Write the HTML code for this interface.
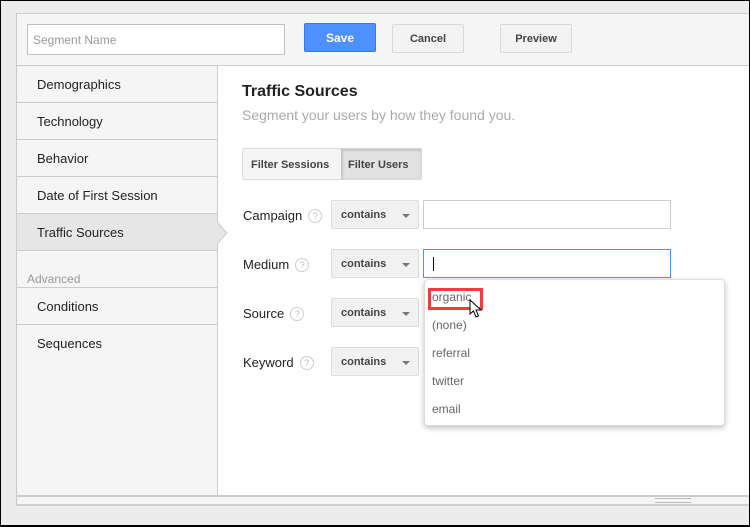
<!DOCTYPE html><html><head><style>
*{margin:0;padding:0;box-sizing:border-box}
body{width:750px;height:527px;overflow:hidden;background:#ececec;font-family:"Liberation Sans",Arial,sans-serif;position:relative}
.a{position:absolute}
.frame{left:0;top:0;width:750px;height:527px;border:1px solid #000;border-bottom:2px solid #000}
.panel{left:16px;top:13px;width:734px;height:493px;border:1px solid #ccc;border-right:none;background:#fff}
.hdr{left:17px;top:14px;width:733px;height:52px;background:#f5f5f5;border-bottom:1px solid #ccc}
.btn{border:1px solid #d9d9d9;border-radius:2px;background:#f3f3f3;font-size:11px;font-weight:bold;color:#444;text-align:center}
.side{left:17px;top:66px;width:201px;height:430px;background:#f5f5f5;border-right:1px solid #ccc}
.it{position:absolute;left:0;width:200px;height:37px;border-bottom:1px solid #ccc;font-size:13px;color:#222;padding-left:20px;line-height:38px}
.lbl{position:absolute;left:243px;font-size:13px;color:#222}
.q{display:inline-block;width:14px;height:14px;border:1px solid #ccc;border-radius:50%;font-size:9px;color:#bbb;text-align:center;line-height:12px;margin-left:6px;vertical-align:1px}
.sel{position:absolute;left:331px;width:88px;height:29px;border:1px solid #dcdcdc;border-radius:2px;background:#f1f1f1;font-size:11px;font-weight:bold;color:#444;padding-left:9px;line-height:28px}
.sel:after{content:"";position:absolute;right:8px;top:13px;border:4px solid transparent;border-top:4px solid #777;border-bottom:none}
.inp{position:absolute;left:423px;width:248px;height:29px;border:1px solid #ccc;background:#fff}
.dd{left:424px;top:279px;width:301px;height:147px;background:#fff;border:1px solid #ddd;border-radius:4px;box-shadow:0 2px 6px rgba(0,0,0,.25)}
.di{position:absolute;left:7px;font-size:12px;color:#666}
</style></head><body>
<div class="a panel"></div>
<div class="a hdr"></div>
<div class="a" style="left:27px;top:24px;width:258px;height:31px;border:1px solid #c0c0c0;background:#fff;font-size:12px;color:#999;padding:8px 0 0 5px">Segment Name</div>
<div class="a" style="left:304px;top:23px;width:72px;height:29px;background:#4d90fe;border:1px solid #3079ed;border-radius:2px;color:#fff;font-size:12px;font-weight:bold;text-align:center;line-height:29px">Save</div>
<div class="a btn" style="left:392px;top:24px;width:72px;height:29px;line-height:29px">Cancel</div>
<div class="a btn" style="left:500px;top:24px;width:72px;height:29px;line-height:29px">Preview</div>
<div class="a side">
<div class="it" style="top:0">Demographics</div>
<div class="it" style="top:37px">Technology</div>
<div class="it" style="top:74px">Behavior</div>
<div class="it" style="top:111px">Date of First Session</div>
<div class="it" style="top:148px;background:#e6e6e6">Traffic Sources</div>
<div style="position:absolute;left:10px;top:206px;font-size:12px;color:#999">Advanced</div>
<div class="it" style="top:221px;height:1px;padding:0"></div>
<div class="it" style="top:222px">Conditions</div>
<div class="it" style="top:259px;border:none">Sequences</div>
</div>
<svg class="a" style="left:217px;top:222px" width="11" height="22"><path d="M0 0 L10 11 L0 22" fill="#e6e6e6" stroke="#ccc"/></svg>
<div class="a" style="left:242px;top:83px;font-size:16px;font-weight:bold;color:#222">Traffic Sources</div>
<div class="a" style="left:242px;top:107px;font-size:14px;color:#aaa">Segment your users by how they found you.</div>
<div class="a" style="left:242px;top:148px;width:180px;height:32px;border:1px solid #d9d9d9;border-radius:2px;background:#f5f5f5;font-size:11px;font-weight:bold;color:#444">
<span style="position:absolute;left:8px;top:10px">Filter Sessions</span>
<div style="position:absolute;left:98px;top:0;width:80px;height:30px;background:#e2e2e2;box-shadow:inset 1px 1px 3px rgba(0,0,0,.2)"><span style="position:absolute;left:7px;top:10px">Filter Users</span></div></div>
<div class="lbl" style="top:208px">Campaign<span class="q">?</span></div>
<div class="sel" style="top:200px">contains</div><div class="inp" style="top:200px"></div>
<div class="lbl" style="top:257px">Medium<span class="q">?</span></div>
<div class="sel" style="top:249px">contains</div><div class="inp" style="top:249px;border-color:#4d90fe"><div style="position:absolute;left:9px;top:7px;width:1px;height:14px;background:#000"></div></div>
<div class="lbl" style="top:306px">Source<span class="q">?</span></div>
<div class="sel" style="top:298px">contains</div>
<div class="lbl" style="top:355px">Keyword<span class="q">?</span></div>
<div class="sel" style="top:347px">contains</div>
<div class="a dd">
<div class="di" style="top:10px">organic</div>
<div class="di" style="top:38px">(none)</div>
<div class="di" style="top:66px">referral</div>
<div class="di" style="top:94px">twitter</div>
<div class="di" style="top:122px">email</div>
<div style="position:absolute;left:3px;top:8px;width:55px;height:22px;border:3px solid #e8403a"></div>
</div>
<svg class="a" style="left:469px;top:299px" width="14" height="20"><path d="M1 1 L1 15 L4.5 12 L7 18 L9.5 17 L7 11 L12 11 Z" fill="#fff" stroke="#000" stroke-width="1"/></svg>
<div class="a" style="left:17px;top:495px;width:733px;height:2px;background:#ccc"></div>
<div class="a" style="left:17px;top:497px;width:733px;height:8px;background:#f5f5f5;border-bottom:1px solid #ccc"></div>
<div class="a" style="left:655px;top:498px;width:36px;height:5px;border-top:1px solid #bbb;border-bottom:1px solid #bbb"></div>
<div class="a frame"></div>
</body></html>
